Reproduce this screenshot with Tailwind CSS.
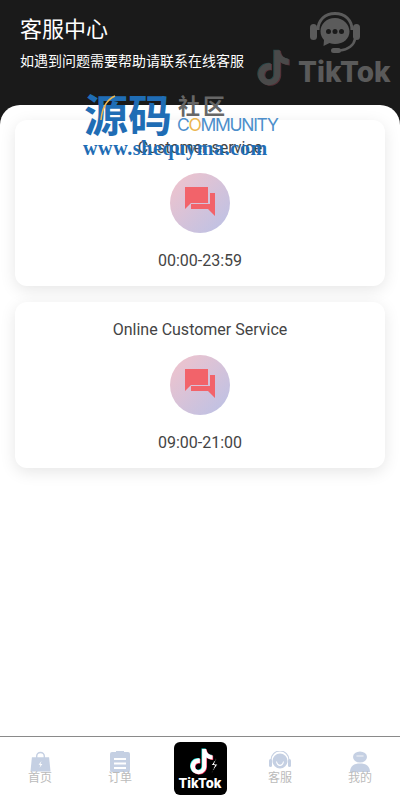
<!DOCTYPE html>
<html lang="zh">
<head>
<meta charset="utf-8">
<script src="https://cdn.jsdelivr.net/npm/@tailwindcss/browser@4"></script>
</head>
<body class="bg-white">
<div class="relative flex h-[800px] w-[400px] flex-col overflow-hidden bg-white font-['Roboto','Noto_Sans_CJK_SC',sans-serif]">
  <header class="relative h-[125px] shrink-0 bg-[#1a1a1a] px-5 pt-[17px] text-white">
    <h1 class="text-[22px] leading-[26px] font-normal">客服中心</h1>
    <p class="mt-[9px] text-[14px] leading-[18px]">如遇到问题需要帮助请联系在线客服</p>
    <svg class="absolute top-[12px] left-[310px] h-[41px] w-[50px]" viewBox="0 0 50 41" fill="none">
      <path d="M8 18C8 8 15 1.500 25 1.500S42 8 42 18" stroke="#5b5b5b" stroke-width="3"/>
      <rect x="0" y="12" width="7" height="16" rx="3.500" fill="#5b5b5b"/>
      <rect x="43" y="12" width="7" height="16" rx="3.500" fill="#5b5b5b"/>
      <path d="M45 27c-1 6-7 11-15 11.500" stroke="#5b5b5b" stroke-width="2.500"/>
      <rect x="21" y="36" width="10" height="5" rx="2.500" fill="#5b5b5b"/>
      <path fill="#5b5b5b" d="M25 6C16.500 6 10.500 12 10.500 19.500c0 3.500 1.500 6.500 3.500 8.500l-.5 6 6-3c1.700.6 3.500 1 5.500 1 8.500 0 14.500-5.500 14.500-12.500S33.500 6 25 6z"/>
      <circle cx="18.500" cy="19.500" r="2.500" fill="#1a1a1a"/><circle cx="25" cy="19.500" r="2.500" fill="#1a1a1a"/><circle cx="31.500" cy="19.500" r="2.500" fill="#1a1a1a"/>
    </svg>
    <div class="absolute top-[49px] left-[256px] flex items-center">
      <svg class="h-[39px] w-[35px]" viewBox="0 0 24 25" fill="#4a4a4a">
        <path fill="#27474a" transform="translate(-.7 -.4)" d="M12.525.02c1.31-.02 2.61-.01 3.91-.02.08 1.53.63 3.09 1.75 4.17 1.12 1.11 2.7 1.62 4.24 1.79v4.03c-1.44-.05-2.89-.35-4.2-.97-.57-.26-1.1-.59-1.62-.93-.01 2.92.01 5.84-.02 8.75-.08 1.4-.54 2.79-1.35 3.94-1.31 1.92-3.58 3.17-5.91 3.21-1.43.08-2.86-.31-4.08-1.03-2.02-1.19-3.44-3.37-3.65-5.71-.02-.5-.03-1-.01-1.49.18-1.9 1.12-3.72 2.58-4.96 1.66-1.44 3.98-2.13 6.15-1.72.02 1.48-.04 2.96-.04 4.44-.99-.32-2.15-.23-3.02.37-.63.41-1.11 1.04-1.36 1.75-.21.51-.15 1.07-.14 1.61.24 1.64 1.82 3.02 3.5 2.87 1.12-.01 2.19-.66 2.77-1.61.19-.33.4-.67.41-1.06.1-1.79.06-3.57.07-5.36.01-4.03-.01-8.05.02-12.07z"/>
        <path fill="#553036" transform="translate(.7 .4)" d="M12.525.02c1.31-.02 2.61-.01 3.91-.02.08 1.53.63 3.09 1.75 4.17 1.12 1.11 2.7 1.62 4.24 1.79v4.03c-1.44-.05-2.89-.35-4.2-.97-.57-.26-1.1-.59-1.62-.93-.01 2.92.01 5.84-.02 8.75-.08 1.4-.54 2.79-1.35 3.94-1.31 1.92-3.58 3.17-5.91 3.21-1.43.08-2.86-.31-4.08-1.03-2.02-1.19-3.44-3.37-3.65-5.71-.02-.5-.03-1-.01-1.49.18-1.9 1.12-3.72 2.58-4.96 1.66-1.44 3.98-2.13 6.15-1.72.02 1.48-.04 2.96-.04 4.44-.99-.32-2.15-.23-3.02.37-.63.41-1.11 1.04-1.36 1.75-.21.51-.15 1.07-.14 1.61.24 1.64 1.82 3.02 3.5 2.87 1.12-.01 2.19-.66 2.77-1.61.19-.33.4-.67.41-1.06.1-1.79.06-3.57.07-5.36.01-4.03-.01-8.05.02-12.07z"/>
        <path d="M12.525.02c1.31-.02 2.61-.01 3.91-.02.08 1.53.63 3.09 1.75 4.17 1.12 1.11 2.7 1.62 4.24 1.79v4.03c-1.44-.05-2.89-.35-4.2-.97-.57-.26-1.1-.59-1.62-.93-.01 2.92.01 5.84-.02 8.75-.08 1.4-.54 2.79-1.35 3.94-1.31 1.92-3.58 3.17-5.91 3.21-1.43.08-2.86-.31-4.08-1.03-2.02-1.19-3.44-3.37-3.65-5.71-.02-.5-.03-1-.01-1.49.18-1.9 1.12-3.72 2.58-4.96 1.66-1.44 3.98-2.13 6.15-1.72.02 1.48-.04 2.96-.04 4.44-.99-.32-2.15-.23-3.02.37-.63.41-1.11 1.04-1.36 1.75-.21.51-.15 1.07-.14 1.61.24 1.64 1.82 3.02 3.5 2.87 1.12-.01 2.19-.66 2.77-1.61.19-.33.4-.67.41-1.06.1-1.79.06-3.57.07-5.36.01-4.03-.01-8.05.02-12.07z"/>
      </svg>
      <span class="mt-[6px] ml-[7px] font-['Inter',sans-serif] text-[28px] leading-none font-extrabold text-[#5a5a5a]">TikTok</span>
    </div>
  </header>

  <main class="relative z-0 -mt-[20px] flex-1 rounded-t-[20px] bg-white px-[15px] pt-[15px]">
    <section class="flex h-[166px] flex-col items-center rounded-[12px] bg-white pt-[17px] shadow-[0_4px_16px_rgba(0,0,0,0.1)]">
      <h2 class="text-[16px] leading-[22px] text-[#444]">Customer service</h2>
      <div class="mt-[14px] flex h-[60px] w-[60px] items-center justify-center rounded-full bg-gradient-to-br from-[#f2c3cb] to-[#b9c1e6]">
        <svg class="-mt-[3px] h-[29px] w-[30px]" viewBox="0 0 30 29" fill="#f2636a"><path d="M0 0h23v16H6l-6 6z"/><path d="M25 6h5v23l-7-7H6v-5h19z"/></svg>
      </div>
      <p class="mt-[16px] text-[16px] leading-[24px] text-[#444]">00:00-23:59</p>
    </section>
    <section class="mt-[16px] flex h-[166px] flex-col items-center rounded-[12px] bg-white pt-[17px] shadow-[0_4px_16px_rgba(0,0,0,0.1)]">
      <h2 class="text-[16px] leading-[22px] text-[#444]">Online Customer Service</h2>
      <div class="mt-[14px] flex h-[60px] w-[60px] items-center justify-center rounded-full bg-gradient-to-br from-[#f2c3cb] to-[#b9c1e6]">
        <svg class="-mt-[3px] h-[29px] w-[30px]" viewBox="0 0 30 29" fill="#f2636a"><path d="M0 0h23v16H6l-6 6z"/><path d="M25 6h5v23l-7-7H6v-5h19z"/></svg>
      </div>
      <p class="mt-[16px] text-[16px] leading-[24px] text-[#444]">09:00-21:00</p>
    </section>
  </main>

  <div class="absolute top-[85px] left-[84px] h-[75px] w-[200px]">
    <div class="flex items-start">
      <span class="relative font-['Noto_Sans_CJK_SC',sans-serif] text-[44px] leading-[56px] font-bold text-[#1f6db5]">源码<svg class="absolute top-[10px] left-[16px] h-[26px] w-[16px]" viewBox="0 0 16 26" fill="none"><path d="M1 25C2 14 6 5 15 1" stroke="#ecb64f" stroke-width="1.500"/></svg></span>
      <div class="ml-[6px] pt-[7px]">
        <p class="font-['Noto_Sans_CJK_SC',sans-serif] text-[22px] leading-[24px] font-bold tracking-[3px] text-[#666]">社区</p>
        <p class="-ml-[1px] font-['Inter',sans-serif] text-[17.5px] leading-[18px] font-normal tracking-[-1.3px] text-[#4d8fcb]">C<span class="text-[#ecb64f]">O</span>MMUNITY</p>
      </div>
    </div>
    <p class="-mt-[4px] -ml-[1px] whitespace-nowrap font-['Liberation_Serif',serif] text-[20px] leading-[22px] font-bold tracking-[0.65px] text-[#1f6db5]">www.shequyma.com</p>
  </div>

  <nav class="flex h-[64px] shrink-0 items-start border-t border-[#8a8a8a] bg-white">
    <a class="flex w-[80px] flex-col items-center pt-[14px]">
      <svg class="h-[21px] w-[21px]" viewBox="0 0 22 21" fill="#c5d0e3"><path d="M7 7V5a4 4 0 0 1 8 0v2" fill="none" stroke="#c5d0e3" stroke-width="1.500"/><path d="M2 6h18l1.500 15H.5z"/><path d="M12 10l-3 4h2l-1 3 3-4h-2z" fill="#fff"/></svg>
      <span class="-mt-[1px] text-[12px] leading-[14px] text-[#bbb]">首页</span>
    </a>
    <a class="flex w-[80px] flex-col items-center pt-[14px]">
      <svg class="h-[21px] w-[20px]" viewBox="0 0 20 21" fill="#c5d0e3"><path fill-rule="evenodd" d="M2 1h4V0h8v1h4a2 2 0 0 1 2 2v16a2 2 0 0 1-2 2H2a2 2 0 0 1-2-2V3a2 2 0 0 1 2-2zm2 6v2h12V7zm0 4.500v2h12v-2zm0 4.500v2h12v-2z"/></svg>
      <span class="-mt-[1px] text-[12px] leading-[14px] text-[#bbb]">订单</span>
    </a>
    <a class="flex w-[80px] justify-center pt-[5px]">
      <div class="flex h-[53px] w-[53px] flex-col items-center rounded-[6px] bg-black pt-[6px]">
        <svg class="h-[29px] w-[38px]" viewBox="0 0 38 29" fill="none">
          <g transform="translate(8 1) scale(1.050)">
            <path fill="#25f4ee" transform="translate(-.6 -.4)" d="M12.525.02c1.31-.02 2.61-.01 3.91-.02.08 1.53.63 3.09 1.75 4.17 1.12 1.11 2.7 1.62 4.24 1.79v4.03c-1.44-.05-2.89-.35-4.2-.97-.57-.26-1.1-.59-1.62-.93-.01 2.92.01 5.84-.02 8.75-.08 1.4-.54 2.79-1.35 3.94-1.31 1.92-3.58 3.17-5.91 3.21-1.43.08-2.86-.31-4.08-1.03-2.02-1.19-3.44-3.37-3.65-5.71-.02-.5-.03-1-.01-1.49.18-1.9 1.12-3.72 2.58-4.96 1.66-1.44 3.98-2.13 6.15-1.72.02 1.48-.04 2.96-.04 4.44-.99-.32-2.15-.23-3.02.37-.63.41-1.11 1.04-1.36 1.75-.21.51-.15 1.07-.14 1.61.24 1.64 1.82 3.02 3.5 2.87 1.12-.01 2.19-.66 2.77-1.61.19-.33.4-.67.41-1.06.1-1.79.06-3.57.07-5.36.01-4.03-.01-8.05.02-12.07z"/>
            <path fill="#fe2c55" transform="translate(.6 .4)" d="M12.525.02c1.31-.02 2.61-.01 3.91-.02.08 1.53.63 3.09 1.75 4.17 1.12 1.11 2.7 1.62 4.24 1.79v4.03c-1.44-.05-2.89-.35-4.2-.97-.57-.26-1.1-.59-1.62-.93-.01 2.92.01 5.84-.02 8.75-.08 1.4-.54 2.79-1.35 3.94-1.31 1.92-3.58 3.17-5.91 3.21-1.43.08-2.86-.31-4.08-1.03-2.02-1.19-3.44-3.37-3.65-5.71-.02-.5-.03-1-.01-1.49.18-1.9 1.12-3.72 2.58-4.96 1.66-1.44 3.98-2.13 6.15-1.72.02 1.48-.04 2.96-.04 4.44-.99-.32-2.15-.23-3.02.37-.63.41-1.11 1.04-1.36 1.75-.21.51-.15 1.07-.14 1.61.24 1.64 1.82 3.02 3.5 2.87 1.12-.01 2.19-.66 2.77-1.61.19-.33.4-.67.41-1.06.1-1.79.06-3.57.07-5.36.01-4.03-.01-8.05.02-12.07z"/>
            <path fill="#fff" d="M12.525.02c1.31-.02 2.61-.01 3.91-.02.08 1.53.63 3.09 1.75 4.17 1.12 1.11 2.7 1.62 4.24 1.79v4.03c-1.44-.05-2.89-.35-4.2-.97-.57-.26-1.1-.59-1.62-.93-.01 2.92.01 5.84-.02 8.75-.08 1.4-.54 2.79-1.35 3.94-1.31 1.92-3.58 3.17-5.91 3.21-1.43.08-2.86-.31-4.08-1.03-2.02-1.19-3.44-3.37-3.65-5.71-.02-.5-.03-1-.01-1.49.18-1.9 1.12-3.72 2.58-4.96 1.66-1.44 3.98-2.13 6.15-1.72.02 1.48-.04 2.96-.04 4.44-.99-.32-2.15-.23-3.02.37-.63.41-1.11 1.04-1.36 1.75-.21.51-.15 1.07-.14 1.61.24 1.64 1.82 3.02 3.5 2.87 1.12-.01 2.19-.66 2.77-1.61.19-.33.4-.67.41-1.06.1-1.79.06-3.57.07-5.36.01-4.03-.01-8.05.02-12.07z"/>
          </g>
          <path d="M36 9l-6 8.500h3.500L30 26l7-10h-3.500z" fill="#fff" stroke="#000"/>
        </svg>
        <span class="-mt-[1px] font-['Inter',sans-serif] text-[13px] leading-[15px] font-extrabold text-white">TikTok</span>
      </div>
    </a>
    <a class="flex w-[80px] flex-col items-center pt-[14px]">
      <svg class="h-[21px] w-[22px]" viewBox="0 0 22 21" fill="#c5d0e3"><path d="M2 10V9a9 9 0 0 1 18 0v1" fill="none" stroke="#c5d0e3" stroke-width="1.200"/><rect x="0" y="8" width="3" height="8" rx="1.500"/><rect x="19" y="8" width="3" height="8" rx="1.500"/><path fill-rule="evenodd" d="M11 2.500a7.500 7.500 0 1 1 0 15 7.500 7.500 0 0 1 0-15zM7 10.500c.5 3 2 4.500 4 4.500s3.500-1.500 4-4.500h-1c-.5 2-1.500 3.300-3 3.300S8.500 12.500 8 10.500z"/></svg>
      <span class="-mt-[1px] text-[12px] leading-[14px] text-[#bbb]">客服</span>
    </a>
    <a class="flex w-[80px] flex-col items-center pt-[14px]">
      <svg class="h-[21px] w-[22px]" viewBox="0 0 22 21" fill="#c5d0e3"><ellipse cx="11" cy="6" rx="7" ry="5.500"/><path d="M1 21c0-6 4-8.500 10-8.500S21 15 21 21z"/><path d="M8 5h6" stroke="#e3e8f1" stroke-width="1.500" stroke-linecap="round"/></svg>
      <span class="-mt-[1px] text-[12px] leading-[14px] text-[#bbb]">我的</span>
    </a>
  </nav>
</div>
</body>
</html>
